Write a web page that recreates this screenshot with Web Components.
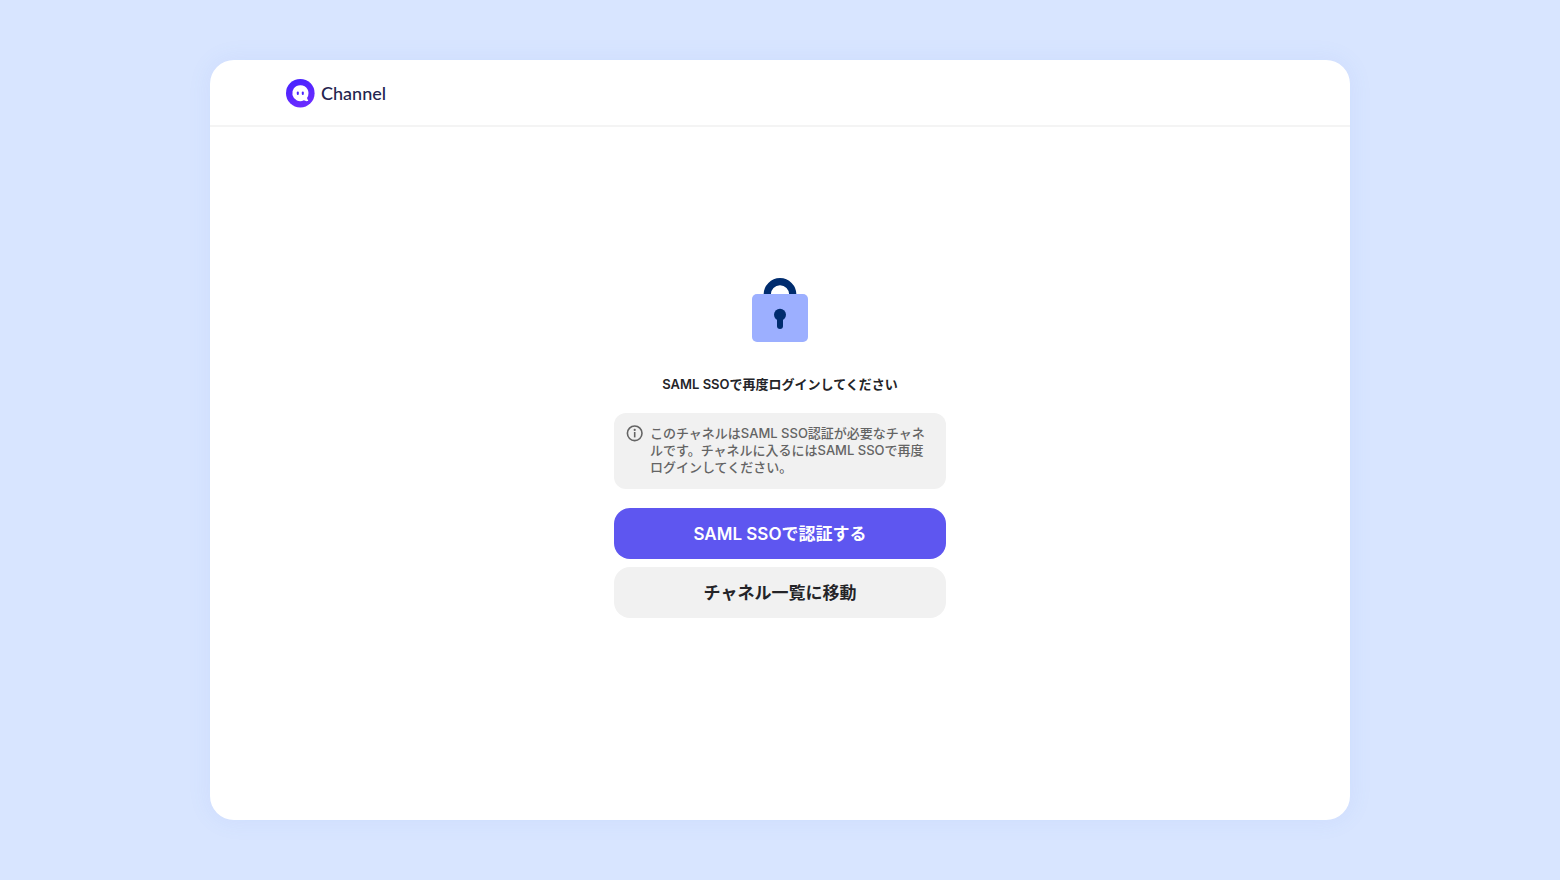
<!DOCTYPE html>
<html lang="ja">
<head>
<meta charset="utf-8">
<meta name="viewport" content="width=device-width, initial-scale=1">
<title>Channel</title>
<style>
    body {
        margin: 0;
        background: #d8e5ff;
        font-family: Inter, "Noto Sans CJK JP", sans-serif;
        color: #242428;
    }
</style>
</head>
<body>

<page-card>
    <channel-logo slot="header"></channel-logo>
    <lock-icon></lock-icon>
    <sso-login>
        <span slot="title">SAML SSOで再度ログインしてください</span>
        <info-notice slot="notice">このチャネルはSAML SSO認証が必要なチャネルです。チャネルに入るにはSAML SSOで再度ログインしてください。</info-notice>
        <action-button slot="actions" variant="primary">SAML SSOで認証する</action-button>
        <action-button slot="actions">チャネル一覧に移動</action-button>
    </sso-login>
</page-card>

<script>
class PageCard extends HTMLElement {

    constructor() {
        super();
        this.attachShadow({mode: 'open'});
        this.render();
    }

    render() {
        this.shadowRoot.innerHTML =
        /*html*/
        `
        <style>
            :host {
                display: flex;
                box-sizing: border-box;
                min-height: 100vh;
                padding: 60px 24px;
                justify-content: center;
            }

            .card {
                display: flex;
                flex-direction: column;
                width: 100%;
                max-width: 1140px;
                border-radius: 24px;
                background: #fff;
                box-shadow: 0 0 24px rgba(90, 130, 230, 0.09);
            }

            header {
                padding: 18px 76px 17px;
                border-bottom: 2px solid #f4f4f4;
            }

            main {
                display: flex;
                flex: 1;
                flex-direction: column;
                align-items: center;
                justify-content: center;
                gap: 33px;
                padding: 0 24px 52px;
            }
        </style>

        <div class="card">
            <header><slot name="header"></slot></header>
            <main><slot></slot></main>
        </div>
        `;
    }
}

class ChannelLogo extends HTMLElement {

    constructor() {
        super();
        this.attachShadow({mode: 'open'});
        this.render();
    }

    render() {
        this.shadowRoot.innerHTML =
        /*html*/
        `
        <style>
            :host {
                display: flex;
            }

            a {
                display: flex;
                align-items: center;
                gap: 6px;
                color: #24244f;
                font: 500 18px/30px Lato, sans-serif;
                text-decoration: none;
            }

            svg {
                display: block;
            }
        </style>

        <a href="#">
            <svg width="29" height="30" viewBox="0 0 29 30" aria-hidden="true">
                <defs>
                    <linearGradient id="fill" x1="0" y1="0" x2="0.4" y2="1">
                        <stop offset="0" stop-color="#4322ff"/>
                        <stop offset="1" stop-color="#6a2bff"/>
                    </linearGradient>
                </defs>
                <circle cx="14.3" cy="15.2" r="14.3" fill="url(#fill)"/>
                <path d="M14.2 7.2a8 8 0 1 0 3.7 15.1c1.1.7 2.5 1.1 3.9.7.5-.1.5-.6.2-.9-.7-.7-1-1.5-.9-2.4A8 8 0 0 0 14.2 7.2z" fill="#fff"/>
                <rect x="10.8" y="13.5" width="2" height="3.6" rx="1" fill="#4a25ff"/>
                <rect x="15.8" y="13.5" width="2" height="3.6" rx="1" fill="#4a25ff"/>
            </svg>
            <span>Channel</span>
        </a>
        `;
    }
}

class LockIcon extends HTMLElement {

    constructor() {
        super();
        this.attachShadow({mode: 'open'});
        this.render();
    }

    render() {
        this.shadowRoot.innerHTML =
        /*html*/
        `
        <style>
            :host {
                display: block;
            }

            svg {
                display: block;
            }
        </style>

        <svg width="56" height="64" viewBox="0 0 56 64" aria-hidden="true">
            <path d="M15.2 18v-1.5a12.8 12.8 0 0 1 25.6 0v1.5" fill="none" stroke="#002c6e" stroke-width="7.2"/>
            <rect y="16" width="56" height="48" rx="5" fill="#9cafff"/>
            <circle cx="28" cy="36.7" r="6" fill="#002c6e"/>
            <path d="M28 38v10" stroke="#002c6e" stroke-width="6" stroke-linecap="round"/>
        </svg>
        `;
    }
}

class SsoLogin extends HTMLElement {

    constructor() {
        super();
        this.attachShadow({mode: 'open'});
        this.render();
    }

    render() {
        this.shadowRoot.innerHTML =
        /*html*/
        `
        <style>
            :host {
                display: flex;
                flex-direction: column;
                width: 100%;
                max-width: 332px;
            }

            h1 {
                margin: 0 0 20px;
                font-size: 13px;
                font-weight: 600;
                line-height: 18px;
                text-align: center;
            }

            .actions {
                display: flex;
                flex-direction: column;
                gap: 8px;
                margin-top: 19px;
            }
        </style>

        <h1><slot name="title"></slot></h1>
        <slot name="notice"></slot>
        <div class="actions"><slot name="actions"></slot></div>
        `;
    }
}

class InfoNotice extends HTMLElement {

    constructor() {
        super();
        this.attachShadow({mode: 'open'});
        this.render();
    }

    render() {
        this.shadowRoot.innerHTML =
        /*html*/
        `
        <style>
            :host {
                display: flex;
                gap: 7px;
                padding: 12px 12px 13px;
                border-radius: 12px;
                background: #f1f1f1;
                color: #646464;
            }

            svg {
                display: block;
                flex: none;
            }

            p {
                margin: 0;
                font-size: 13px;
                font-weight: 500;
                line-height: 17px;
            }
        </style>

        <svg width="17" height="17" viewBox="0 0 17 17" aria-hidden="true">
            <circle cx="8.7" cy="8.3" r="7.3" fill="none" stroke="currentColor" stroke-width="1.6"/>
            <circle cx="8.7" cy="4.9" r="1.1" fill="currentColor"/>
            <path d="M8.7 7v5.4" stroke="currentColor" stroke-width="1.6"/>
        </svg>
        <p><slot></slot></p>
        `;
    }
}

class ActionButton extends HTMLElement {

    constructor() {
        super();
        this.attachShadow({mode: 'open'});
        this.render();
    }

    render() {
        this.shadowRoot.innerHTML =
        /*html*/
        `
        <style>
            :host {
                display: block;
            }

            button {
                display: block;
                width: 100%;
                padding: 14px 16px 12px;
                border: 0;
                border-radius: 16px;
                background: #f1f1f1;
                color: #242428;
                font-family: inherit;
                font-size: 17px;
                font-weight: 600;
                line-height: 25px;
                cursor: pointer;
            }

            :host([variant="primary"]) button {
                background: #5e56f0;
                color: #fff;
            }
        </style>

        <button type="button"><slot></slot></button>
        `;
    }
}

customElements.define('page-card', PageCard);
customElements.define('channel-logo', ChannelLogo);
customElements.define('lock-icon', LockIcon);
customElements.define('sso-login', SsoLogin);
customElements.define('info-notice', InfoNotice);
customElements.define('action-button', ActionButton);
</script>
</body>
</html>
